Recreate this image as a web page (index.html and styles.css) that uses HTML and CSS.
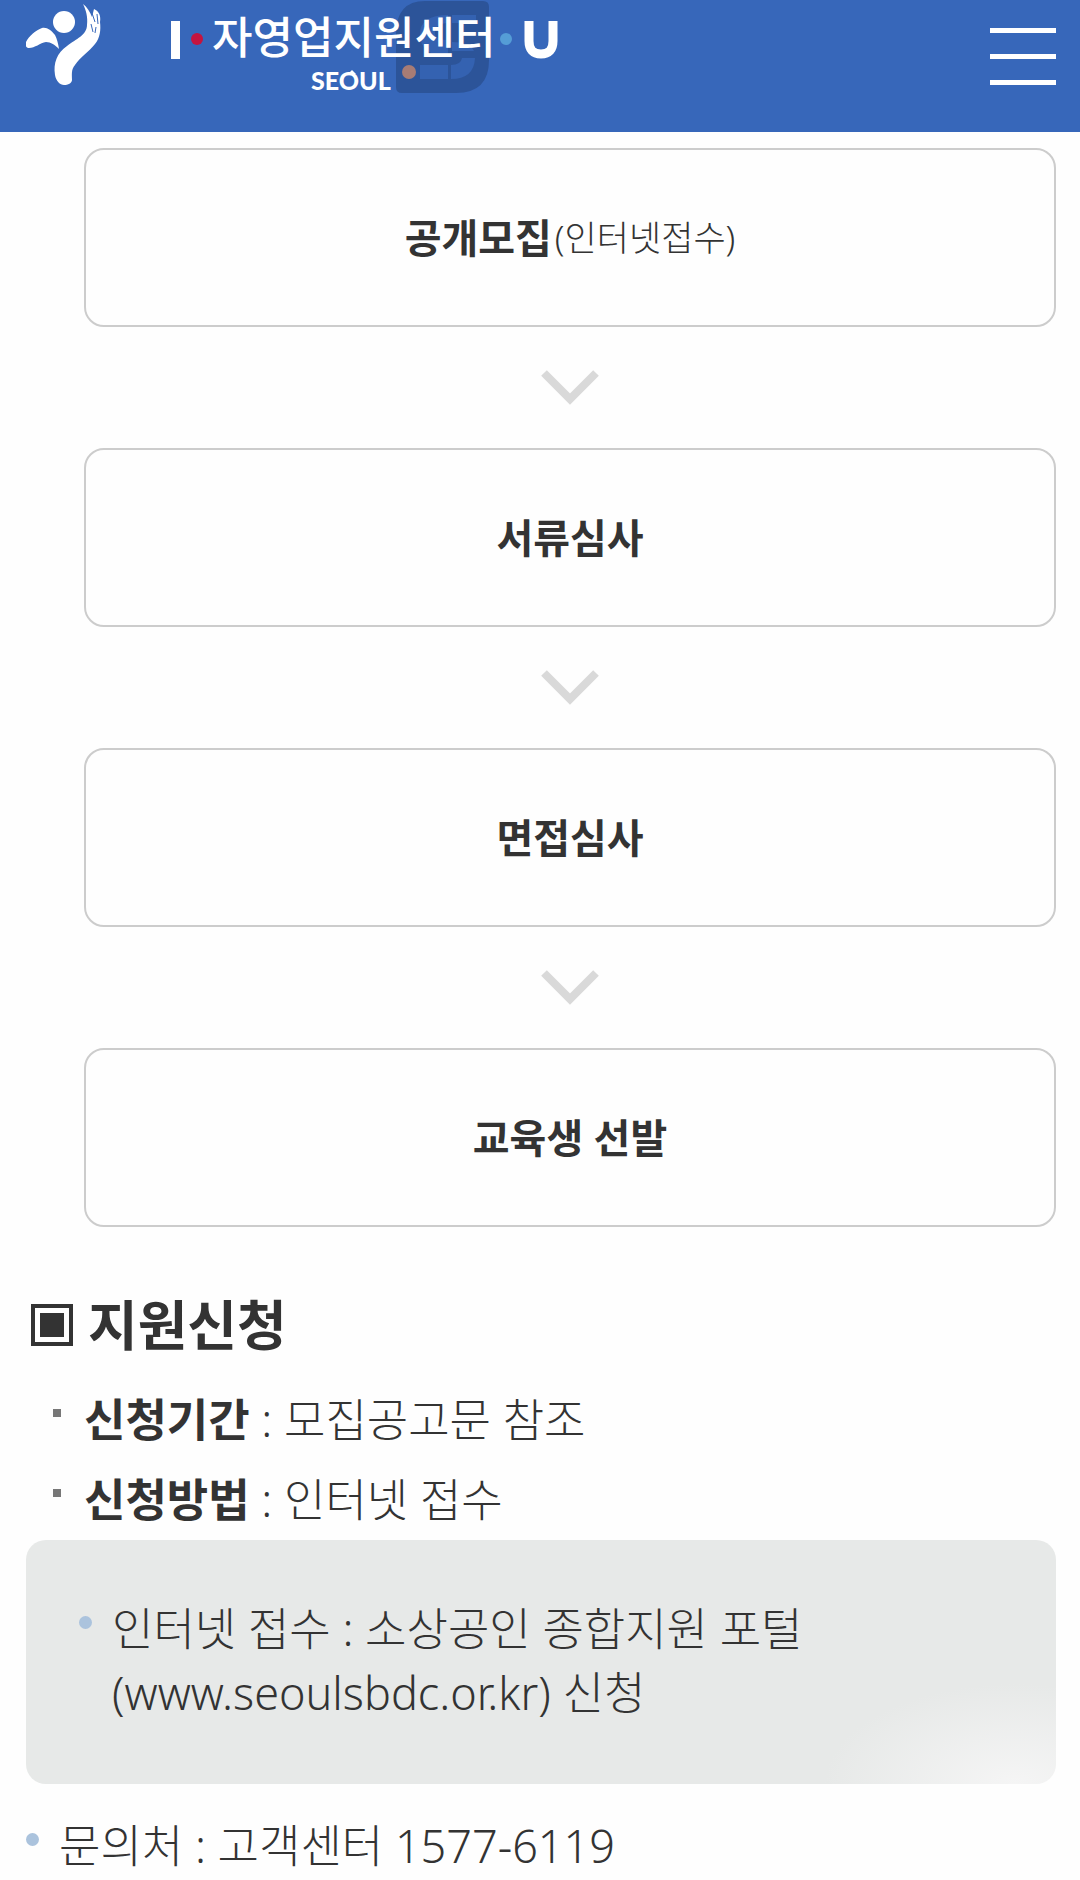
FILE: index.html
```html
<!DOCTYPE html>
<html lang="ko">
<head>
  <meta charset="UTF-8">
  <meta name="viewport" content="width=device-width, initial-scale=1.0">
  <title>자영업지원센터</title>
  <link rel="stylesheet" href="styles.css">
</head>
<body>
  <header class="header">
    <a class="logo" href="#" aria-label="자영업지원센터">
      <svg class="logo-mark" width="76" height="88" viewBox="0 0 76 88">
        <circle cx="38" cy="22" r="11"/>
        <path d="M0 42C3 36 10 30 16 28c5-1 9 2 13 7 2 4 3 8 4 14-4-4-8-7-13-7-6 1-11 6-17 6-3 0-4-3-3-6z"/>
        <path d="M57 4c4 3 7 8 9 13l2-8c5 2 7 7 6 13 1 8 0 16-5 22-6 8-15 13-20 21-4 5-3 9-3 15 0 3-4 5-8 5-4 0-8-4-9-10-2-12 2-22 12-29 9-7 20-11 20-21 1-8-1-15-4-21z"/>
        <path class="brush" d="M66 13l3 9M71 14l1 10M65 24l2 8M70 27l-1 6"/>
      </svg>
      <svg class="logo-text" width="400" height="100" viewBox="0 0 400 100">
        <g class="badge">
          <path class="badge-bg" d="M257 1h58q6 0 6 6v53q0 33-33 33h-54q-6 0-6-6V34q0-33 29-33z"/>
          <path class="badge-fg" d="M284 15h24v8h-24zM252 65h28v14h-28zM283 65q10 0 11-7h13q-1 21-24 21zM280 15v8q-13 0-13 10 0 7 13 7v16q-28 0-28-22 0-19 28-19zM284 42q18 0 22 9h-22z"/>
          <circle class="badge-dot" cx="241" cy="72" r="7"/>
        </g>
        <rect x="3" y="21" width="9" height="38"/>
        <circle class="dot-red" cx="29" cy="39" r="6"/>
        <text class="logo-name" x="44" y="54">자영업지원센터</text>
        <circle class="dot-blue" cx="338" cy="39" r="6"/>
        <path class="logo-u" d="M361 21v20q0 13 12 13t12-13V21"/>
        <text class="logo-city" x="143" y="90">SEOUL</text>
        <path d="M180 74l4-4 4 4z"/>
      </svg>
    </a>
    <button class="menu" type="button" aria-label="메뉴">
      <span></span>
      <span></span>
      <span></span>
    </button>
  </header>

  <main class="content">
    <ol class="steps">
      <li class="step"><strong>공개모집</strong><span>(인터넷접수)</span></li>
      <li class="arrow" aria-hidden="true"><svg width="58" height="36" viewBox="0 0 58 36"><path d="M3 3l26 26L55 3"/></svg></li>
      <li class="step"><strong>서류심사</strong></li>
      <li class="arrow" aria-hidden="true"><svg width="58" height="36" viewBox="0 0 58 36"><path d="M3 3l26 26L55 3"/></svg></li>
      <li class="step"><strong>면접심사</strong></li>
      <li class="arrow" aria-hidden="true"><svg width="58" height="36" viewBox="0 0 58 36"><path d="M3 3l26 26L55 3"/></svg></li>
      <li class="step"><strong>교육생 선발</strong></li>
    </ol>

    <h2 class="title"><i class="title-mark"></i>지원신청</h2>
    <ul class="info">
      <li><strong>신청기간</strong> : 모집공고문 참조</li>
      <li><strong>신청방법</strong> : 인터넷 접수</li>
    </ul>
    <div class="box">
      <p class="dot">인터넷 접수 : 소상공인 종합지원 포털<br>(www.seoulsbdc.or.kr) 신청</p>
    </div>
    <p class="dot contact">문의처 : 고객센터 1577-6119</p>
  </main>
</body>
</html>
```
FILE: styles.css
```css
* {
  box-sizing: border-box;
}
body {
  margin: 0;
  background: #fefefe;
  color: #333;
  font-family: "Noto Sans", "Noto Sans CJK KR", sans-serif;
  font-size: 45px;
  font-weight: 300;
  line-height: 64px;
}
ol, ul, p, h2 {
  margin: 0;
  padding: 0;
  list-style: none;
}

/* header */
.header {
  display: flex;
  justify-content: space-between;
  align-items: flex-start;
  height: 132px;
  padding: 0 24px 0 26px;
  background: #3767ba;
}
.logo {
  display: flex;
  gap: 66px;
}
.logo svg {
  fill: #fff;
}
.logo-mark .brush {
  fill: none;
  stroke: #3767ba;
  stroke-width: 1;
}
.logo-text .badge-bg {
  fill: #2c5499;
}
.logo-text .badge-fg {
  fill: #3462b1;
}
.badge-dot {
  fill: #a77c75;
}
.dot-red {
  fill: #c5143f;
}
.dot-blue {
  fill: #559dd6;
}
.logo-name {
  font-family: "Noto Sans CJK KR", sans-serif;
  font-size: 44px;
  font-weight: 500;
}
.logo-city {
  font-family: Lato, sans-serif;
  font-size: 25px;
  font-weight: 900;
}
.logo-text .logo-u {
  fill: none;
  stroke: #fff;
  stroke-width: 9;
}
.menu {
  display: flex;
  flex-direction: column;
  gap: 21px;
  width: 66px;
  margin-top: 28px;
  padding: 0;
  border: 0;
  background: none;
  cursor: pointer;
}
.menu span {
  width: 100%;
  height: 5px;
  background: #fff;
}

/* selection steps */
.content {
  padding: 16px 24px 0 26px;
}
.steps {
  padding-left: 58px;
}
.step {
  display: flex;
  justify-content: center;
  align-items: center;
  gap: 3px;
  height: 179px;
  border: 2px solid #ccc;
  border-radius: 20px;
  font-size: 35px;
}
.step strong {
  font-size: 40px;
}
.arrow {
  display: flex;
  justify-content: center;
  align-items: center;
  height: 121px;
}
.arrow path {
  fill: none;
  stroke: #d9d9d9;
  stroke-width: 8;
}

/* application */
.title {
  display: flex;
  align-items: center;
  gap: 15px;
  margin-top: 58px;
  padding-left: 5px;
  font-size: 54px;
  font-weight: 700;
  line-height: 80px;
}
.title-mark {
  width: 42px;
  height: 42px;
  border: 4px solid #333;
  background: #333;
  box-shadow: inset 0 0 0 5px #fefefe;
}
.info {
  margin-top: 15px;
  padding-left: 58px;
}
.info li {
  position: relative;
  line-height: 80px;
}
.info li::before {
  content: "";
  position: absolute;
  top: 29px;
  left: -31px;
  width: 8px;
  height: 8px;
  background: #777;
}
strong {
  font-weight: 700;
}
.box {
  padding: 57px 24px 59px 53px;
  border-radius: 20px;
  background: radial-gradient(ellipse 190px 100px at 96% 100%, #f5f5f5, #e7e9e8) #e7e9e8;
}
.dot {
  position: relative;
  padding-left: 33px;
}
.dot::before {
  content: "";
  position: absolute;
  top: 19px;
  left: 0;
  width: 13px;
  height: 13px;
  border-radius: 50%;
  background: #abc3dd;
}
.contact {
  margin-top: 30px;
}
```
